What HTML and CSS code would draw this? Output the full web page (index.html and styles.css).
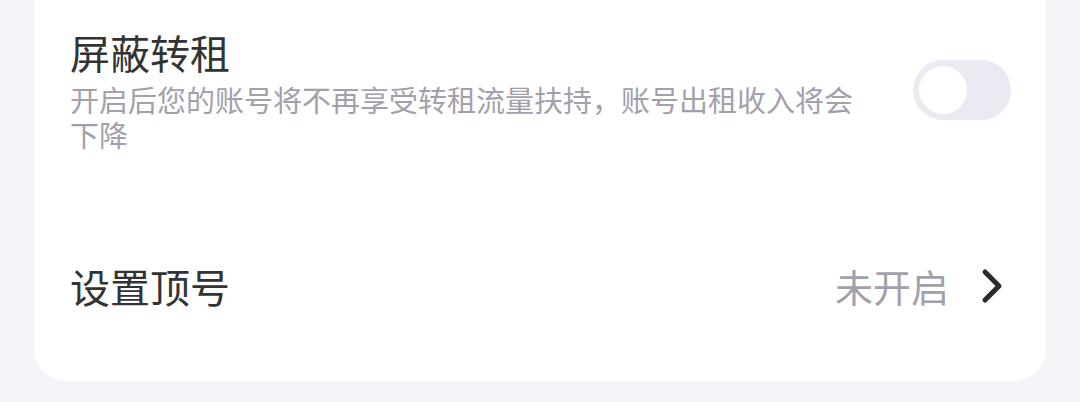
FILE: index.html
```html
<!DOCTYPE html>
<html lang="zh-CN">
<head>
<meta charset="UTF-8">
<meta name="viewport" content="width=device-width, initial-scale=1.0">
<title>设置</title>
<link rel="stylesheet" href="styles.css">
</head>
<body>

<!-- 设置卡片 -->
<div class="card">
  <div class="row row-switch">
    <div class="text">
      <div class="title">屏蔽转租</div>
      <div class="desc">开启后您的账号将不再享受转租流量扶持，账号出租收入将会下降</div>
    </div>
    <div class="toggle"><span class="knob"></span></div>
  </div>

  <div class="row row-link">
    <div class="title">设置顶号</div>
    <div class="value">
      <span>未开启</span>
      <svg class="chevron" width="26" height="40" viewBox="0 0 26 40">
        <polyline points="6,6 20,20 6,34" fill="none" stroke="#2b2b2e" stroke-width="5" stroke-linecap="round" stroke-linejoin="round"/>
      </svg>
    </div>
  </div>
</div>

</body>
</html>
```

FILE: styles.css
```css
body {
  margin: 0;
  background-color: #f4f5f9;
  font-family: "Noto Sans CJK SC", "Noto Sans", sans-serif;
}
.card {
  margin: 0 34px;
  background-color: #fff;
  border-radius: 0 0 32px 32px;
  padding: 27px 35px 68px 36px;
}
.row {
  display: flex;
  align-items: center;
  justify-content: space-between;
}
.title {
  font-size: 40px;
  line-height: 50px;
  color: #333;
}
.row-switch .title {
  margin-bottom: 5px;
}
.desc {
  font-size: 29px;
  line-height: 35px;
  color: #a2a1ab;
  max-width: 800px;
}
.toggle {
  width: 98px;
  height: 60px;
  border-radius: 30px;
  background-color: #e9eaf2;
  display: flex;
  align-items: center;
  padding: 0 6px;
  box-sizing: border-box;
}
.knob {
  width: 48px;
  height: 48px;
  border-radius: 50%;
  background-color: #fff;
}
.row-link {
  margin-top: 106px;
}
.value {
  display: flex;
  align-items: center;
  gap: 30px;
  font-size: 38px;
  color: #a2a1ab;
}
.chevron {
  display: block;
  margin-right: 6px;
}
```
